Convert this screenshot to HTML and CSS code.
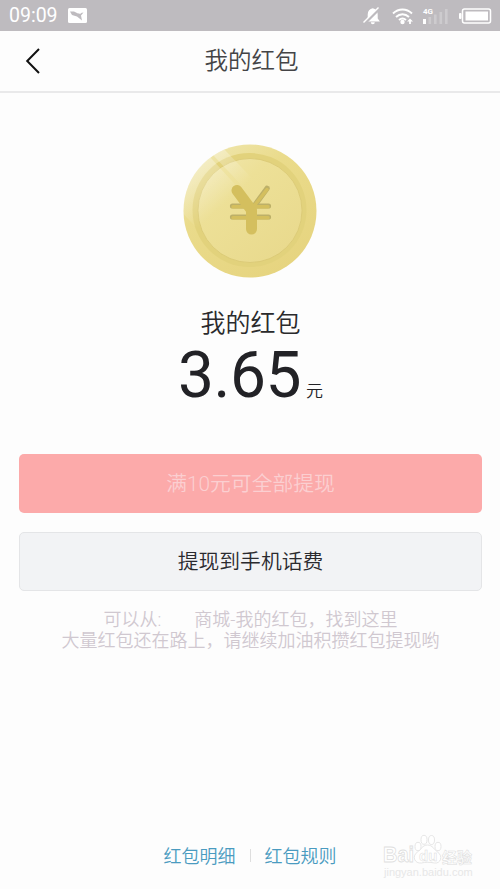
FILE: index.html
```
<!DOCTYPE html>
<html lang="zh-CN">
<head>
<meta charset="utf-8">
<title>我的红包</title>
<link rel="stylesheet" href="styles.css">
</head>
<body>
<div class="screen">
  <div class="status">
    <span class="clock">09:09</span>
    <svg class="photo" width="19" height="15" viewBox="0 0 19 15"><rect width="19" height="15" rx="1.5" fill="#fff"/><path d="M2 3.500h4l4 2 5.500-1-2.500 3 1 5L9 8.500 4 7z" fill="#bebbbf"/><circle cx="12" cy="4.500" r="1.300" fill="#fff"/></svg>
    <svg class="signals" width="138" height="30" viewBox="0 0 138 30">
      <g fill="#fff">
        <path d="M3.500 20.500l2.200-3v-4c0-3.500 2-5.800 5-6.200 3 .4 5 2.700 5 6.200v4l2.200 3zM8.800 21.300h4a2 2 0 0 1-4 0z"/>
        <path d="M2 23L18 7" stroke="#bebbbf" stroke-width="3"/>
        <path d="M1.500 21.500L16.500 6.500" stroke="#fff" stroke-width="1.500"/>
        <circle cx="40.500" cy="21" r="2.200"/>
        <path d="M48 17.500l3 3h-2.100v2.500h-1.800v-2.500H45z"/>
        <rect x="61" y="18" width="3" height="5"/>
      </g>
      <path d="M31 12.500c5.500-5.400 13.500-5.400 19 0M34 16c3.900-3.700 9.100-3.700 13 0M37 19c2.200-2 4.800-2 7 0" fill="none" stroke="#fff" stroke-width="1.900"/>
      <g fill="#cdcbce"><rect x="66.500" y="16" width="2.600" height="7"/><rect x="72" y="13.500" width="2.600" height="9.500"/><rect x="77.500" y="11" width="2.600" height="12"/><rect x="83" y="8" width="2.600" height="15"/></g>
      <text x="61" y="12.800" class="net">4G</text>
      <rect x="100.500" y="8" width="28" height="14" rx="2" fill="none" stroke="#fff" stroke-width="1.500"/>
      <rect x="103.500" y="10.500" width="22.500" height="9" fill="#fff"/><rect x="97" y="12" width="2.500" height="6" rx="1" fill="#fff"/>
    </svg>
  </div>
  <header class="bar">
    <svg class="back" width="16" height="28" viewBox="0 0 16 28"><path d="M14 2L2.200 14 14 26" fill="none" stroke="#111" stroke-width="2"/></svg>
    <h1>我的红包</h1>
  </header>
  <main>
    <svg class="coin" width="134" height="134" viewBox="0 0 134 134">
      <defs>
        <linearGradient id="rim" x1=".15" y1=".05" x2=".8" y2=".95"><stop offset="0" stop-color="#efe6ac"/><stop offset=".35" stop-color="#eadb8b"/><stop offset="1" stop-color="#e6d47f"/></linearGradient>
        <linearGradient id="face" x1=".1" y1=".1" x2=".8" y2=".9"><stop offset="0" stop-color="#f0e5a8"/><stop offset=".3" stop-color="#ede097"/><stop offset="1" stop-color="#e9da8e"/></linearGradient>
        <linearGradient id="shine" gradientUnits="userSpaceOnUse" x1="17" y1="20" x2="48" y2="55"><stop offset="0" stop-color="#fff" stop-opacity=".34"/><stop offset="1" stop-color="#fff" stop-opacity="0"/></linearGradient>
        <clipPath id="disc"><circle cx="67" cy="67" r="66.500"/></clipPath>
      </defs>
      <circle cx="67" cy="67" r="66.500" fill="url(#rim)"/>
      <circle cx="66.500" cy="66" r="57" fill="#e2d27c"/>
      <circle cx="67" cy="66.500" r="52" fill="url(#face)" stroke="#d9c874" stroke-width=".8"/>
      <g clip-path="url(#disc)" fill="url(#shine)"><path d="M-25 43L27 13l50 55-50 30z"/><path d="M30 11l9-8 48 50-8 10z"/></g>
      <g fill="none" stroke-linecap="round" stroke="#bdb068">
        <path d="M84 44.500L72 61" stroke-width="5.500"/><path d="M49.500 62h36M49.500 73h36" stroke-width="5.200"/>
      </g>
      <path d="M54 46.500L68.500 66v19" fill="none" stroke="#d4bf5e" stroke-width="11" stroke-linecap="round" stroke-linejoin="round"/>
      <path d="M84 45.500L71 62M50 62.700h35M50 73.700h35" fill="none" stroke="#d4bf5e" stroke-width="3.500" stroke-linecap="round"/>
    </svg>
    <h2>我的红包</h2>
    <div class="amount"><span class="number">3.65</span><span class="unit">元</span></div>
    <div class="button primary">满10元可全部提现</div>
    <div class="button plain">提现到手机话费</div>
    <p class="note"><span>可以从:</span><span class="gap"></span><span>商城-我的红包，找到这里</span><br>大量红包还在路上，请继续加油积攒红包提现哟</p>
  </main>
  <footer><span>红包明细</span><i></i><span>红包规则</span></footer>
  <svg class="watermark" width="100" height="50" viewBox="0 0 100 50">
    <g fill="#fff" stroke="#dfdfdf" stroke-width=".8">
      <text x="0" y="28" class="wm-main" textLength="31" lengthAdjust="spacingAndGlyphs">Bai</text>
      <path d="M44.500 11c5 0 7 5 10 7 6 4 3 12-3 11-5-1-9-1-13 0-7 1-10-7-4-11 3-2 5-7 10-7z"/>
      <ellipse cx="35" cy="12.500" rx="3" ry="4.200"/><ellipse cx="41" cy="5.800" rx="3" ry="4.500"/><ellipse cx="48.500" cy="6" rx="3" ry="4.500"/><ellipse cx="55" cy="12.500" rx="3" ry="4.200"/>
    </g>
    <g fill="#fff" stroke="#dcdcdc" stroke-width=".5">
      <text x="36" y="27" class="wm-du">du</text>
      <text x="59" y="28.500" class="wm-cn">经验</text>
    </g>
    <text x="1" y="41.500" class="wm-url">jingyan.baidu.com</text>
  </svg>
</div>
</body>
</html>
```
FILE: styles.css
```
* { box-sizing: border-box; }
body { margin: 0; background: #fdfdfd; font-family: Roboto, "Noto Sans CJK SC", sans-serif; font-weight: 350; }
.screen { position: relative; width: 500px; height: 889px; overflow: hidden; display: flex; flex-direction: column; }
.status { height: 31px; flex: none; background: #bebbbf; display: flex; align-items: center; padding-left: 9px; }
.clock { color: #fff; font-size: 19.5px; font-weight: 400; line-height: 30px; width: 59px; }
.signals { margin-left: 275px; }
.net { font: 700 8px Roboto, sans-serif; fill: #fff; }
.bar { height: 62px; flex: none; border-bottom: 2px solid #e9e9ea; display: grid; grid-template-columns: 60px 1fr 60px; align-items: center; }
.back { margin-left: 25px; }
h1 { margin: 0; text-align: center; font-size: 23.5px; line-height: 34px; font-weight: 350; color: #444446; padding-left: 3px; }
main { display: flex; flex-direction: column; align-items: center; padding: 51px 18px 0 19px; }
.coin { display: block; margin-right: 1.5px; }
h2 { margin: 28px 0 0; font-size: 25px; line-height: 36px; font-weight: 350; color: #2a2a2c; }
.amount { display: flex; align-items: baseline; height: 70px; line-height: 68px; color: #222226; margin-left: 0; }
.number { font-size: 64px; font-weight: 400; letter-spacing: -.4px; }
.unit { font-size: 17px; margin-left: 5px; }
.button { width: 100%; height: 59px; border-radius: 5px; display: flex; align-items: center; justify-content: center; font-size: 20.8px; padding-bottom: 3px; }
.primary { margin-top: 42px; background: #fcaaaa; color: #fbcfd1; }
.plain { margin-top: 19px; background: #f2f3f5; border: 1px solid #e4e5e7; color: #2a2a2e; }
.note { margin: 18px 0 0; font-size: 18px; line-height: 21px; color: #d0c8d0; text-align: center; white-space: nowrap; }
.gap { display: inline-block; width: 33px; }
footer { margin-top: auto; height: 30px; margin-bottom: 19px; display: flex; align-items: center; justify-content: center; font-size: 18px; color: #4a9bc0; }
footer i { width: 1px; height: 13px; margin: 0 14px; background: #dedede; }
.watermark { position: absolute; left: 383px; top: 834px; }
.wm-main { font: 700 22px "Liberation Sans", sans-serif; }
.wm-du { font: 700 15px "Liberation Sans", sans-serif; }
.wm-cn { font: 700 15px "Noto Sans CJK SC", sans-serif; }
.wm-url { font: 400 11px "Liberation Sans", sans-serif; fill: #e7e7e7; }
```
